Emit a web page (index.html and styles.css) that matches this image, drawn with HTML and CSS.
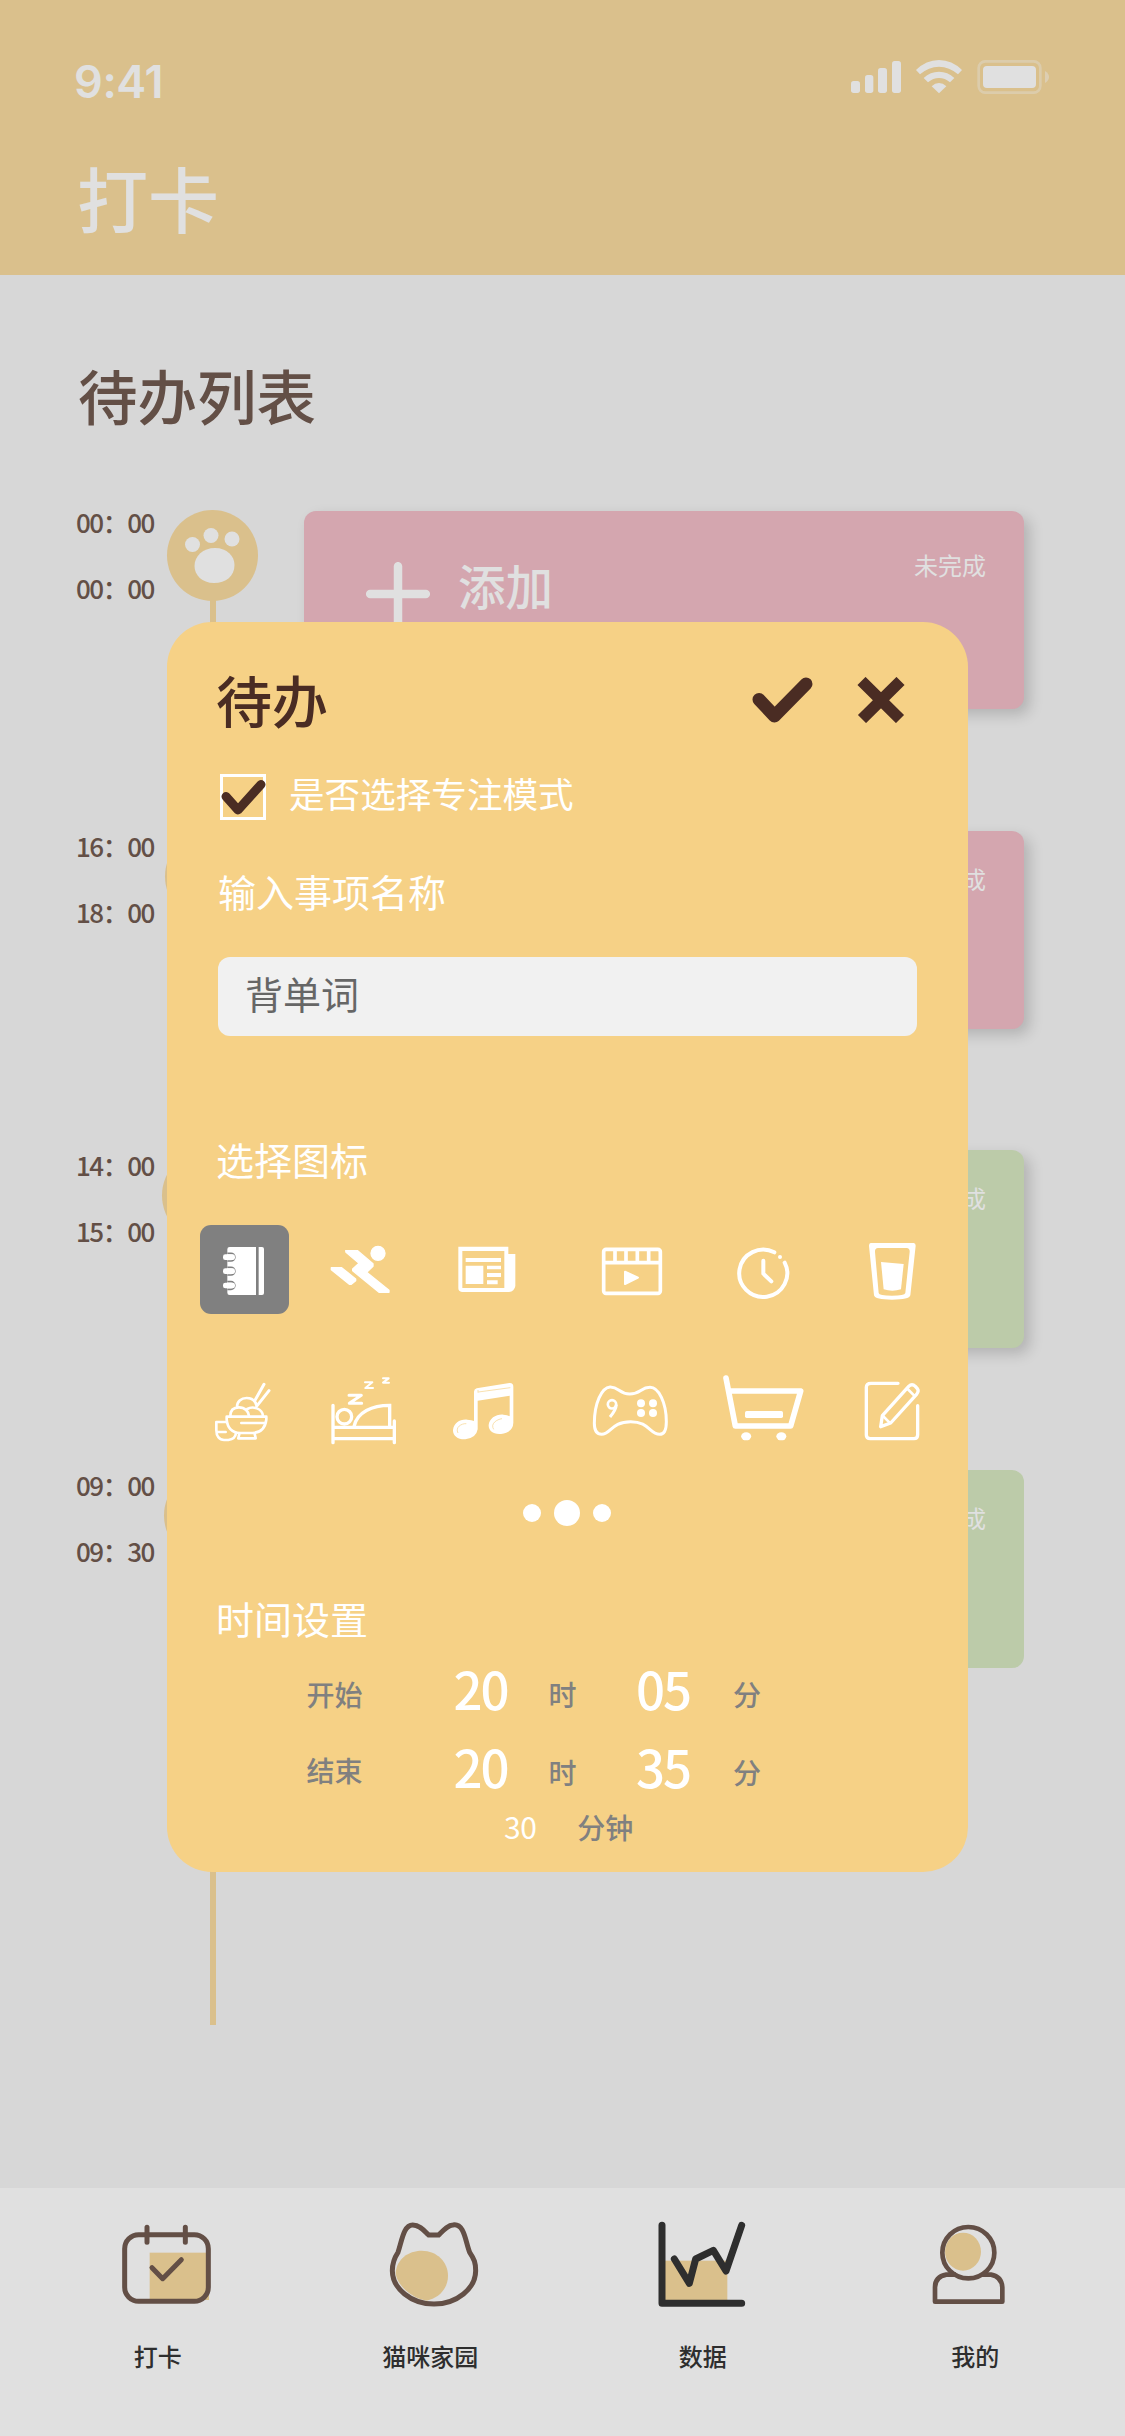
FILE: index.html
```html
<!DOCTYPE html>
<html lang="zh-CN">
<head>
<meta charset="utf-8">
<title>打卡</title>
<link rel="stylesheet" href="styles.css">
</head>
<body>
<div class="screen">
  <header class="header">
    <div class="status-bar">
      <span class="clock">9:41</span>
      <svg class="status-icons" viewBox="60 27 600 108" fill="#e0e0e0">
        <rect x="63" y="93" width="27" height="36" rx="8"/>
        <rect x="105" y="75" width="25" height="54" rx="8"/>
        <rect x="144" y="54" width="27" height="75" rx="8"/>
        <rect x="186" y="33" width="27" height="96" rx="8"/>
        <path d="M258 60 Q288 30 327 30 Q366 30 396 60 L384 73 Q358 50 327 50 Q296 50 270 73 Z"/>
        <path d="M281 84 Q301 65 327 65 Q353 65 373 84 L360 97 Q345 84 327 84 Q309 84 294 97 Z"/>
        <path d="M305 109 Q315 99 327 99 Q339 99 349 109 L327 130 Z"/>
        <rect x="446" y="34" width="185" height="94" rx="20" fill="none" stroke="#e0e0e0" stroke-opacity=".38" stroke-width="8"/>
        <rect x="459" y="48" width="159" height="66" rx="12"/>
        <path d="M645 63 Q657 70 657 81 Q657 92 645 99 Z" fill-opacity=".45"/>
      </svg>
    </div>
    <h1 class="page-title">打卡</h1>
  </header>

  <main class="content">
    <h2 class="list-title">待办列表</h2>
    <div class="timeline">
      <div class="row row-first">
        <div class="times"><span>00：00</span><span>00：00</span></div>
        <div class="marker">
          <svg viewBox="0 0 91 91" fill="#e0e0e0">
            <circle cx="25.500" cy="34.500" r="7.500"/><circle cx="44" cy="25.500" r="7.500"/><circle cx="65" cy="29" r="7.500"/>
            <path d="M48 38 C60 38 67.500 46 67.500 55 C67.500 66 59 73 47 73 C35 73 27.500 65 27.500 56 C27.500 46 36 38 48 38 Z"/>
          </svg>
        </div>
        <div class="card pink">
          <svg class="plus" viewBox="0 0 64 64"><path d="M4.200 32H59.800M32 4.200V59.800" stroke="#e0e0e0" stroke-width="8.500" stroke-linecap="round"/></svg>
          <span class="card-name">添加</span>
          <span class="card-state">未完成</span>
        </div>
      </div>
      <div class="row">
        <div class="times"><span>16：00</span><span>18：00</span></div>
        <div class="marker shift-2"></div>
        <div class="card pink"><span class="card-state">未完成</span></div>
      </div>
      <div class="row">
        <div class="times"><span>14：00</span><span>15：00</span></div>
        <div class="marker shift-5"></div>
        <div class="card green"><span class="card-state">未完成</span></div>
      </div>
      <div class="row">
        <div class="times"><span>09：00</span><span>09：30</span></div>
        <div class="marker shift-3"></div>
        <div class="card green flat"><span class="card-state">未完成</span></div>
      </div>
    </div>
  </main>

  <nav class="tabs">
    <div class="tab">
      <svg viewBox="69 90 330 300" fill="none" stroke="#634f46" stroke-width="15" stroke-linecap="round">
        <rect x="209" y="218" width="178" height="142" fill="#dac08c" stroke="none"/>
        <rect x="134" y="164" width="251" height="200" rx="42"/>
        <path d="M201 142V187M316 142V187"/>
        <path d="M216 263L248 296L304 239" stroke-linejoin="round"/>
      </svg>
      <span>打卡</span>
    </div>
    <div class="tab">
      <svg viewBox="885 90 330 300" fill="none" stroke="#634f46" stroke-width="15">
        <path d="M1025 212C1072 212 1104 247 1104 287C1104 328 1074 355 1040 362C990 354 947 310 947 277C951 238 984 212 1025 212Z" fill="#dac08c" stroke="none"/>
        <path d="M1046 165H1076C1090 151 1104 135 1119 135C1153 129 1156 184 1169 217C1183 238 1187 248 1187 272C1187 325 1131 372 1062 372C993 372 937 325 937 272C937 248 942 235 954 217C966 181 971 135 998 135C1021 135 1034 154 1046 165Z"/>
      </svg>
      <span>猫咪家园</span>
    </div>
    <div class="tab">
      <svg viewBox="143 90 330 300" fill="none" stroke="#2e2e2e" stroke-width="21" stroke-linecap="round" stroke-linejoin="round">
        <rect x="190" y="242" width="191" height="124" fill="#dac08c" stroke="none"/>
        <path d="M185 136V370H424"/>
        <path d="M222 237L267 310L286 237L339 211L377 273L424 136"/>
      </svg>
      <span>数据</span>
    </div>
    <div class="tab">
      <svg viewBox="961 90 330 300" fill="none" stroke="#634f46" stroke-width="14">
        <ellipse cx="1090" cy="215" rx="54" ry="57" fill="#dac08c" stroke="none"/>
        <ellipse cx="1106" cy="218" rx="78" ry="77"/>
        <path d="M1069 284H1040Q1006 290 1006 322V365H1208V322Q1206 290 1174 284H1146" stroke-linejoin="round"/>
      </svg>
      <span>我的</span>
    </div>
  </nav>

  <section class="dialog">
    <div class="dialog-head">
      <h3>待办</h3>
      <svg class="confirm" viewBox="0 0 61 47"><path d="M7 22.500L22.500 39L54 7" fill="none" stroke="#4a2c23" stroke-width="13" stroke-linecap="round" stroke-linejoin="round"/></svg>
      <svg class="cancel" viewBox="0 0 48 46"><path d="M4.500 4L43 42M43.500 4L5 42" stroke="#4a2c23" stroke-width="11.500"/></svg>
    </div>
    <div class="focus">
      <div class="checkbox"><svg viewBox="0 0 46 46"><path d="M6 22.500L18 36L41 10.500" fill="none" stroke="#4a2c23" stroke-width="9" stroke-linecap="round" stroke-linejoin="round"/></svg></div>
      <span>是否选择专注模式</span>
    </div>
    <div class="label label-name">输入事项名称</div>
    <div class="field">背单词</div>
    <div class="label label-icons">选择图标</div>
    <div class="icons">
      <div class="tile">
        <svg viewBox="60 75 267 267" fill="#fff">
          <path d="M149 141H228V285H149Q142 285 142 278V148Q142 141 149 141ZM236 141H246Q252 141 252 147V279Q252 285 246 285H236Z"/>
          <g stroke="#808080" stroke-width="5"><path d="M142 160H153A11.500 11.500 0 0 1 153 183H142M142 202H153A11.500 11.500 0 0 1 153 225H142M142 245H153A11.500 11.500 0 0 1 153 268H142"/></g>
          <rect x="129" y="163" width="36" height="17" rx="7"/><rect x="129" y="205" width="36" height="17" rx="7"/><rect x="129" y="248" width="36" height="17" rx="7"/>
        </svg>
      </div>
      <svg viewBox="393 75 300 267" fill="#fff" stroke="#fff" stroke-width="4" stroke-linejoin="round">
        <circle cx="594" cy="160" r="21"/>
        <path d="M497 152H533L579 191V199L560 217L627 271V277H597L518 212V207L537 190L498 157Z"/>
        <path d="M454 203H485L527 237V242L514 253H508L454 209Z"/>
      </svg>
      <svg viewBox="765 75 300 267" fill="#fff">
        <path fill-rule="evenodd" d="M835 140H985V162H1006V258Q1003 275 987 276H846Q835 275 835 265ZM847 153V264H973V153Z"/>
        <path d="M857 174H963V186H857ZM857 197H910V252H857ZM921 197H963V208H921ZM921 219H963V231H921ZM921 241H953V253H921Z"/>
      </svg>
      <svg viewBox="63 75 300 267" fill="none" stroke="#fff" stroke-width="11">
        <rect x="131" y="148" width="170" height="132" rx="7"/>
        <path d="M131 188H301M165 150V188M198 150V188M232 150V188M266 150V188"/>
        <path d="M195 215L234 233L195 252Z" fill="#fff" stroke-width="6" stroke-linejoin="round"/>
      </svg>
      <svg viewBox="459 75 300 267" fill="none" stroke="#fff" stroke-width="12" stroke-linecap="round">
        <path d="M643 157A72 71 0 1 0 674 188"/>
        <path d="M610 182V221L634 244" stroke-linejoin="round"/>
        <circle cx="660" cy="171" r="6" fill="#fff" stroke="none"/>
      </svg>
      <svg viewBox="840 75 300 267" fill="#fff">
        <path fill-rule="evenodd" d="M932 129H1061Q1067 130 1067 137L1051 286Q1048 299 996 299Q945 299 942 286L927 137Q927 130 932 129ZM954 144Q944 145 945 156L956 279Q957 287 996 287Q1034 287 1036 279L1049 156Q1050 145 1040 144Z"/>
        <path d="M963 186L1031 192L1023 268Q997 276 971 268Z"/>
      </svg>

      <svg class="in-tile" viewBox="60 498 267 267" fill="none" stroke="#fff" stroke-width="8" stroke-linecap="round" stroke-linejoin="round">
        <path d="M140 650H259V659Q254 698 218 699H180Q144 698 140 659ZM184 669H257"/>
        <path d="M151 648C151 629 163 622 177 622C195 622 206 635 207 648M202 627C218 617 247 625 249 648M171 621C171 605 183 594 200 594C217 594 227 605 230 618"/>
        <path d="M252 553L225 601M267 572L232 616" stroke-width="9"/>
        <path d="M178 701L175 715H227L224 701M139 666H109V690C109 710 119 720 132 720H145C159 718 167 710 168 699M111 696H137"/>
      </svg>
      <svg viewBox="393 498 300 267" fill="none" stroke="#fff" stroke-width="10" stroke-linecap="round">
        <path d="M459 616V728M643 663V728M461 682H641M461 716H641"/>
        <ellipse cx="493" cy="650" rx="22" ry="22"/>
        <path d="M522 680C530 636 578 616 629 616V680"/>
        <path d="M507 586H544L508 610H545" stroke-width="9" stroke-linejoin="round"/>
        <path d="M555 547H577L556 564H579M609 535H626L609 548H627" stroke-width="6" stroke-linejoin="round"/>
      </svg>
      <svg viewBox="765 498 300 267" fill="#fff">
        <path d="M882 575Q882 567 890 565L988 549Q1000 548 1000 560V668Q999 697 963 702C938 704 925 691 926 675C928 655 949 642 970 644Q982 645 989 649V587L893 602V688Q889 714 856 718C833 719 818 707 819 690C822 668 840 657 862 659Q875 660 882 663Z"/>
        <path d="M895 576L991 563M834 699C825 682 844 670 859 671M941 688C930 671 951 658 966 656" fill="none" stroke="#f6d186" stroke-width="2"/>
        <path d="M894 570V578" stroke="#f6d186" stroke-width="2"/>
      </svg>
      <svg viewBox="63 498 300 267" fill="none" stroke="#fff" stroke-width="9">
        <path d="M150 561C177 560 177 582 209 582C242 582 242 562 270 562C296 562 319 608 319 665C319 689 312 703 299 703C269 703 267 665 212 665C154 665 153 703 125 703C110 703 103 690 103 670C103 610 125 563 150 561Z"/>
        <circle cx="156" cy="613" r="12.500" stroke-width="8"/><path d="M169 614Q168 630 150 651" stroke-width="9"/>
        <g fill="#fff" stroke="none"><circle cx="243" cy="610" r="12"/><circle cx="279" cy="610" r="12"/><circle cx="243" cy="639" r="12"/><circle cx="279" cy="639" r="12"/></g>
      </svg>
      <svg viewBox="459 498 300 267" fill="none" stroke="#fff" stroke-width="17" stroke-linecap="round" stroke-linejoin="round">
        <path d="M498 534L526 678H692L722 573H507"/>
        <rect x="555" y="633" width="114" height="21" rx="5" fill="#fff" stroke="none"/>
        <ellipse cx="558.500" cy="709" rx="15" ry="12" fill="#fff" stroke="none"/><ellipse cx="664" cy="709" rx="15" ry="12" fill="#fff" stroke="none"/>
      </svg>
      <svg viewBox="840 498 300 267" fill="none" stroke="#fff" stroke-width="10" stroke-linecap="round" stroke-linejoin="round">
        <path d="M1014 550H933Q919 550 919 562V705Q919 716 931 716H1062Q1073 716 1073 704V617"/>
        <path d="M962 680L967 647L1046 559Q1056 549 1066 559L1072 566Q1078 573 1069 584L992 669Z"/>
        <path d="M1043 567L1062 586M969 648L988 667" stroke-width="8"/>
      </svg>
    </div>
    <div class="dots"><i></i><i class="current"></i><i></i></div>
    <div class="label label-time">时间设置</div>
    <div class="time-grid">
      <span class="unit">开始</span><b>20</b><span class="unit">时</span><b>05</b><span class="unit">分</span>
      <span class="unit raised">结束</span><b>20</b><span class="unit">时</span><b>35</b><span class="unit">分</span>
    </div>
    <div class="duration"><b>30</b><span>分钟</span></div>
  </section>
</div>
</body>
</html>
```
FILE: styles.css
```css
* { box-sizing: border-box; }
body {
  margin: 0;
  font-family: "Noto Sans CJK SC", sans-serif;
  line-height: 1;
}
h1, h2, h3 { margin: 0; }
svg { display: block; }

.screen {
  position: relative;
  display: flex;
  flex-direction: column;
  width: 1125px;
  height: 2436px;
  overflow: hidden;
  background: #d7d7d7;
}

/* header */
.header {
  height: 275px;
  padding: 59px 75px 0 74px;
  background: #dac08c;
  color: #e0e0e0;
}
.status-bar {
  display: flex;
  justify-content: space-between;
  height: 46px;
}
.clock {
  font: 600 45px/46px Inter, sans-serif;
  letter-spacing: -.400px;
}
.status-icons { width: 200px; height: 36px; }
.page-title {
  margin: 56px 0 0 3px;
  font-size: 71px;
  font-weight: 500;
}

/* list */
.content { flex: 1; padding: 90px 0 0 76px; }
.list-title {
  padding-left: 2px;
  font-size: 59.500px;
  font-weight: 500;
  color: #634f46;
}
.timeline {
  width: 948px;
  height: 1514px;
  margin-top: 86.500px;
  background: linear-gradient(#dac08c, #dac08c) 134px 60px / 6px 100% no-repeat;
}
.row {
  display: flex;
  align-items: flex-start;
  height: 319.670px;
}
.times {
  display: flex;
  flex-direction: column;
  gap: 40px;
  width: 91px;
  padding-top: 2px;
  font-size: 26px;
  font-weight: 500;
  letter-spacing: -1.500px;
  white-space: nowrap;
  color: #634f46;
}
.row-first .times { padding-top: 0; margin-top: -2px; }
.marker {
  width: 91px;
  height: 91px;
  border-radius: 50%;
  background: #dac08c;
}
.row-first .marker { margin-top: -1px; }
.shift-2 { margin-left: -2px; margin-right: 2px; }
.shift-3 { margin-left: -3px; margin-right: 3px; }
.shift-5 { margin-left: -5px; margin-right: 5px; }
.card {
  display: flex;
  align-items: flex-start;
  width: 720px;
  height: 198px;
  margin-left: 46px;
  padding: 36px 38px 0 62px;
  border-radius: 12px;
  box-shadow: 6px 6px 14px rgba(0, 0, 0, .17);
  color: #e0e0e0;
}
.row-first .card { padding-top: 42px; }
.pink { background: #d4a6af; }
.green { background: #bccba9; }
.flat { box-shadow: none; }
.plus { width: 64px; height: 64px; margin-top: 9px; }
.card-name { margin: 8px 0 0 28px; font-size: 47.500px; font-weight: 500; }
.card-state { margin-left: auto; font-size: 24px; }

/* bottom tabs */
.tabs {
  display: grid;
  grid-template-columns: repeat(4, 272.500px);
  height: 248px;
  padding: 22px 0 0 21.500px;
  background: #e0e0e0;
  color: #2e2e2e;
}
.tab {
  display: flex;
  flex-direction: column;
  align-items: center;
  gap: 34px;
  font-size: 24px;
  font-weight: 500;
}
.tab svg { width: 110px; height: 100px; }

/* dialog over the list */
.dialog {
  position: absolute;
  left: 167px;
  top: 622px;
  width: 801px;
  height: 1250px;
  padding: 45px 50px 0;
  border-radius: 45px;
  background: #f6d186;
  color: #fff;
}
.dialog-head {
  display: flex;
  align-items: center;
  height: 70px;
  padding-right: 13px;
}
.dialog-head h3 {
  margin: -6px auto 0 -1px;
  font-size: 56px;
  font-weight: 500;
  color: #4a2c23;
}
.confirm { width: 61px; height: 47px; margin-top: -4px; }
.cancel { width: 48px; height: 46px; margin: -4px 0 0 44px; }
.focus {
  display: flex;
  align-items: center;
  gap: 23px;
  margin: 37px 0 0 3px;
  font-size: 35.600px;
}
.focus span { margin-top: -9px; }
.checkbox { width: 46px; height: 46px; border: 3px solid #fff; }
.checkbox svg { width: 46px; height: 46px; margin: -3px; }
.label { font-size: 38px; }
.label-name { margin: 52px 0 0 1px; }
.field {
  width: 699px;
  height: 79px;
  margin: 47px 0 0 1px;
  padding: 17px 0 0 27px;
  border-radius: 12px;
  background: #f1f1f1;
  font-size: 38px;
  color: #666;
}
.label-icons { margin: 104px 0 0 -1px; }
.icons {
  display: grid;
  grid-template-columns: 103px 116px 132px 160px 104px 150px;
  grid-auto-rows: 89px;
  row-gap: 52px;
  justify-items: center;
  margin: 47px -17px 0;
}
.icons > svg { width: 100px; height: 89px; }
.icons .tile, .icons > .in-tile { justify-self: start; width: 89px; height: 89px; }
.tile { border-radius: 11px; background: #808080; }
.dots {
  display: flex;
  align-items: center;
  justify-content: center;
  gap: 13px;
  height: 26px;
  margin: 45px 1px 0 0;
}
.dots i { width: 18px; height: 18px; border-radius: 50%; background: #fff; }
.dots .current { width: 26px; height: 26px; }
.label-time { margin: 73px 0 0 -1px; }
.time-grid {
  display: grid;
  grid-template-columns: 147px 95px 87.500px 97px auto;
  grid-auto-rows: 78px;
  align-items: center;
  margin: 12px 0 0 89.500px;
}
.time-grid b { font-size: 51px; font-weight: 500; letter-spacing: -2px; }
.unit { margin-top: 11px; font-size: 28px; font-weight: 500; color: #808080; }
.raised { margin-top: 7px; }
.duration {
  display: flex;
  align-items: center;
  gap: 41px;
  height: 42px;
  padding-left: 287px;
}
.duration b { font-size: 30px; font-weight: 400; letter-spacing: -.500px; }
.duration span { margin-top: 1px; font-size: 28px; font-weight: 500; color: #808080; }
```
